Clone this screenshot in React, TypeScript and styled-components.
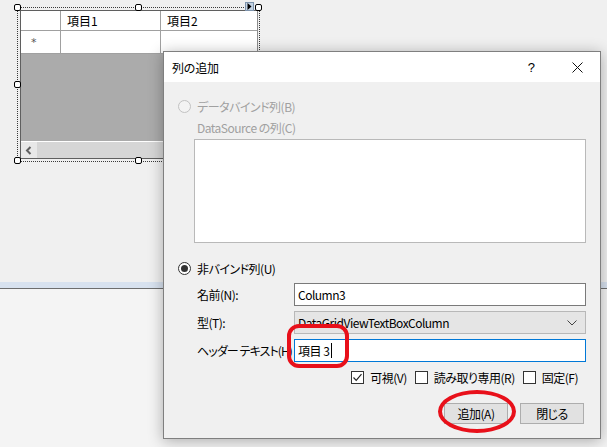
import React from 'react';
import styled, { createGlobalStyle } from 'styled-components';

const GlobalStyle = createGlobalStyle`
  html, body {
    margin: 0;
    padding: 0;
    background: #f3f3f3;
  }
  body {
    font-family: "Noto Sans CJK JP", "Noto Sans", sans-serif;
    font-size: 12px;
    color: #000;
    font-feature-settings: "palt";
  }
`;

const Page = styled.div`
  position: relative;
  width: 607px;
  height: 447px;
  overflow: hidden;
  display: flex;
  flex-direction: column;
  background: #f4f4f4;
`;

/* ---------- designer surface ---------- */

const DesignSurface = styled.div`
  height: 282px;
  box-sizing: border-box;
  padding: 7px 0 0 17px;
  background: #f0f0f0;
`;

const Splitter = styled.div`
  height: 6px;
  background: #d8e2ef;
  border-bottom: 1px solid #6e6e6e;
`;

const Tray = styled.div`
  flex: 1;
  background: #f4f4f4;
`;

const SelectionFrame = styled.div`
  position: relative;
  width: 243px;
  height: 155px;
  box-sizing: border-box;
  border: 1px dotted #3a3a3a;
  padding: 2px 0 1px 2px;
`;

const Handle = styled.div<{ $x: number; $y: number }>`
  position: absolute;
  left: calc(${(p) => p.$x}% - 4px);
  top: calc(${(p) => p.$y}% - 4px);
  width: 7px;
  height: 7px;
  box-sizing: border-box;
  background: #fff;
  border: 1px solid #000;
  border-radius: 2px;
`;

const SmartTag = styled.div`
  position: absolute;
  top: -6px;
  right: 5px;
  width: 9px;
  height: 9px;
  box-sizing: border-box;
  background: #c4d3e3;
  border: 1px solid #7d93ac;
  display: flex;
  align-items: center;
  justify-content: center;
`;

const Grid = styled.div`
  width: 238px;
  height: 149px;
  box-sizing: border-box;
  border: 1px solid #5f5f5f;
  border-right-color: #8a8a8a;
  background: #ababab;
  display: flex;
  flex-direction: column;
`;

const GridRow = styled.div<{ $height: number }>`
  display: grid;
  grid-template-columns: 40px 100px 1fr;
  height: ${(p) => p.$height}px;
  background: #fff;
  border-bottom: 1px solid #a0a0a0;
`;

const GridCell = styled.div`
  border-right: 1px solid #a0a0a0;
  padding-left: 6px;
  display: flex;
  align-items: center;
  font-size: 12px;
  white-space: nowrap;
  &:last-child {
    border-right: none;
  }
`;

const RowMarker = styled(GridCell)`
  padding-left: 10px;
  color: #555;
  font-size: 11px;
  font-family: "DejaVu Sans", sans-serif;
`;

const GridFill = styled.div`
  flex: 1;
  background: #ababab;
`;

const HScroll = styled.div`
  height: 16px;
  border-top: 1px solid #fff;
  display: flex;
  background: #d6d6d6;
`;

const ScrollArrow = styled.div`
  width: 16px;
  background: #e8e8e8;
  display: flex;
  align-items: center;
  justify-content: center;
`;

/* ---------- dialog ---------- */

const Dialog = styled.div`
  position: absolute;
  left: 163px;
  top: 51px;
  width: 438px;
  height: 388px;
  box-sizing: border-box;
  border: 1px solid #7f7f7f;
  background: #f0f0f0;
  box-shadow: 0 2px 14px rgba(0, 0, 0, 0.3);
  display: flex;
  flex-direction: column;
  letter-spacing: -0.5px;
`;

const TitleBar = styled.div`
  height: 30px;
  background: #fff;
  display: flex;
  align-items: center;
  padding-left: 8px;
`;

const Title = styled.div`
  flex: 1;
  font-size: 12px;
  letter-spacing: -0.2px;
`;

const CaptionButton = styled.div`
  width: 46px;
  height: 30px;
  display: flex;
  align-items: center;
  justify-content: center;
  font-family: "Liberation Sans", sans-serif;
  font-size: 13px;
`;

const Body = styled.div`
  flex: 1;
  padding: 16px 14px 0 14px;
  display: flex;
  flex-direction: column;
`;

const RadioRow = styled.div<{ $disabled?: boolean; $top: number }>`
  display: flex;
  align-items: center;
  gap: 6px;
  height: 16px;
  margin-top: ${(p) => p.$top}px;
  color: ${(p) => (p.$disabled ? '#a0a0a0' : '#000')};
`;

const RadioCircle = styled.div<{ $disabled?: boolean; $checked?: boolean }>`
  width: 13px;
  height: 13px;
  box-sizing: border-box;
  border-radius: 50%;
  border: 1px solid ${(p) => (p.$disabled ? '#c2c2c2' : '#333')};
  background: ${(p) => (p.$disabled ? '#f3f3f3' : '#fff')};
  display: flex;
  align-items: center;
  justify-content: center;
  &::after {
    content: '';
    display: ${(p) => (p.$checked ? 'block' : 'none')};
    width: 7px;
    height: 7px;
    border-radius: 50%;
    background: #333;
  }
`;

const DisabledLabel = styled.div`
  margin: 6px 0 0 19px;
  height: 16px;
  line-height: 16px;
  color: #a0a0a0;
`;

const ListBox = styled.div`
  margin: 3px 0 0 16px;
  width: 392px;
  height: 104px;
  box-sizing: border-box;
  background: #fff;
  border: 1px solid #b9b9b9;
`;

const Form = styled.div`
  margin: 7px 0 0 19px;
  display: grid;
  grid-template-columns: 97px 292px;
  grid-auto-rows: 23px;
  row-gap: 5px;
`;

const FieldLabel = styled.div<{ $tight?: boolean }>`
  display: flex;
  align-items: center;
  white-space: nowrap;
  overflow: hidden;
  letter-spacing: ${(p) => (p.$tight ? '-0.9px' : 'inherit')};
`;

const TextBox = styled.div<{ $focused?: boolean }>`
  box-sizing: border-box;
  background: #fff;
  border: 1px solid ${(p) => (p.$focused ? '#0078d7' : '#7a7a7a')};
  padding-left: 3px;
  display: flex;
  align-items: center;
  white-space: nowrap;
`;

const Caret = styled.span`
  display: inline-block;
  width: 1px;
  height: 15px;
  margin-left: 2px;
  background: #000;
`;

const ComboBox = styled.div`
  box-sizing: border-box;
  background: #e5e5e5;
  border: 1px solid #b8b8b8;
  padding: 0 8px 0 3px;
  display: flex;
  align-items: center;
  justify-content: space-between;
  white-space: nowrap;
`;

const CheckRow = styled.div`
  margin: 8px 8px 0 0;
  height: 14px;
  display: flex;
  justify-content: flex-end;
  align-items: center;
  gap: 8px;
`;

const CheckItem = styled.label`
  display: flex;
  align-items: center;
  gap: 6px;
`;

const CheckBox = styled.div`
  width: 13px;
  height: 13px;
  box-sizing: border-box;
  border: 1px solid #333;
  background: #fff;
  display: flex;
  align-items: center;
  justify-content: center;
`;

const ButtonRow = styled.div`
  margin: 19px 2px 0 0;
  display: flex;
  justify-content: flex-end;
  gap: 12px;
`;

const Button = styled.div`
  width: 64px;
  height: 21px;
  box-sizing: border-box;
  background: #e1e1e1;
  border: 1px solid #adadad;
  display: flex;
  align-items: center;
  justify-content: center;
`;

/* ---------- red annotations ---------- */

const RedBox = styled.div`
  position: absolute;
  left: 287px;
  top: 324px;
  width: 62px;
  height: 44px;
  box-sizing: border-box;
  border: 4px solid #e8101a;
  border-radius: 12px;
`;

const RedEllipse = styled.div`
  position: absolute;
  left: 438px;
  top: 390px;
  width: 78px;
  height: 43px;
  box-sizing: border-box;
  border: 4px solid #e8101a;
  border-radius: 50%;
`;

const Check = () => (
  <svg width="11" height="11" viewBox="0 0 11 11">
    <polyline points="1.5,5.5 4.2,8.3 9.5,2.2" fill="none" stroke="#222" strokeWidth="1.2" />
  </svg>
);

const handles: [number, number][] = [
  [0, 0],
  [50, 0],
  [100, 0],
  [0, 50],
  [0, 100],
  [50, 100],
  [100, 100],
];

export default function App() {
  return (
    <>
      <GlobalStyle />
      <Page>
        <DesignSurface>
          <SelectionFrame>
            <Grid>
              <GridRow $height={19}>
                <GridCell />
                <GridCell>項目1</GridCell>
                <GridCell>項目2</GridCell>
              </GridRow>
              <GridRow $height={22}>
                <RowMarker>*</RowMarker>
                <GridCell />
                <GridCell />
              </GridRow>
              <GridFill />
              <HScroll>
                <ScrollArrow>
                  <svg width="8" height="9" viewBox="0 0 8 9">
                    <polyline points="5.5,1 2,4.5 5.5,8" fill="none" stroke="#606060" strokeWidth="2" />
                  </svg>
                </ScrollArrow>
              </HScroll>
            </Grid>
            {handles.map(([x, y]) => (
              <Handle key={`${x}-${y}`} $x={x} $y={y} />
            ))}
            <SmartTag>
              <svg width="5" height="7" viewBox="0 0 5 7">
                <polygon points="0.5,0 4.5,3.5 0.5,7" fill="#000" />
              </svg>
            </SmartTag>
          </SelectionFrame>
        </DesignSurface>
        <Splitter />
        <Tray />

        <Dialog>
          <TitleBar>
            <Title>列の追加</Title>
            <CaptionButton>?</CaptionButton>
            <CaptionButton>
              <svg width="11" height="11" viewBox="0 0 11 11">
                <path d="M0.5 0.5 L10.5 10.5 M10.5 0.5 L0.5 10.5" stroke="#111" strokeWidth="1" />
              </svg>
            </CaptionButton>
          </TitleBar>
          <Body>
            <RadioRow $disabled $top={0}>
              <RadioCircle $disabled />
              データバインド列(B)
            </RadioRow>
            <DisabledLabel>DataSource の列(C)</DisabledLabel>
            <ListBox />
            <RadioRow $top={17}>
              <RadioCircle $checked />
              非バインド列(U)
            </RadioRow>
            <Form>
              <FieldLabel>名前(N):</FieldLabel>
              <TextBox>Column3</TextBox>
              <FieldLabel>型(T):</FieldLabel>
              <ComboBox>
                DataGridViewTextBoxColumn
                <svg width="10" height="6" viewBox="0 0 10 6">
                  <polyline points="0.5,0.5 5,5 9.5,0.5" fill="none" stroke="#444" strokeWidth="1" />
                </svg>
              </ComboBox>
              <FieldLabel $tight>ヘッダー テキスト(H)</FieldLabel>
              <TextBox $focused>
                項目 3
                <Caret />
              </TextBox>
            </Form>
            <CheckRow>
              <CheckItem>
                <CheckBox>
                  <Check />
                </CheckBox>
                可視(V)
              </CheckItem>
              <CheckItem>
                <CheckBox />
                読み取り専用(R)
              </CheckItem>
              <CheckItem>
                <CheckBox />
                固定(F)
              </CheckItem>
            </CheckRow>
            <ButtonRow>
              <Button>追加(A)</Button>
              <Button>閉じる</Button>
            </ButtonRow>
          </Body>
        </Dialog>

        <RedBox />
        <RedEllipse />
      </Page>
    </>
  );
}
